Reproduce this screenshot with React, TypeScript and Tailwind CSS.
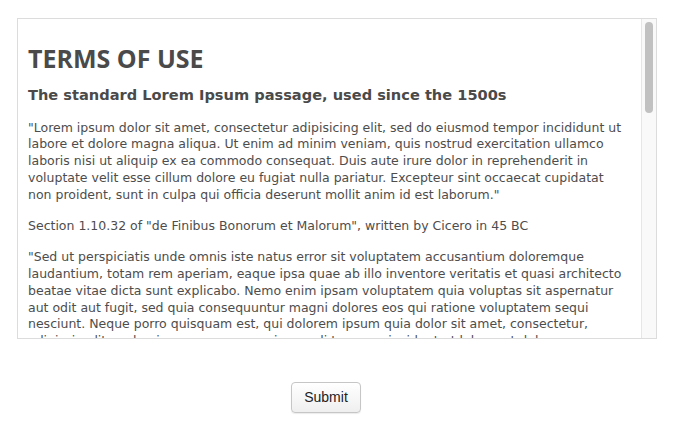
import React from "react";

const paragraphs = [
  '"Lorem ipsum dolor sit amet, consectetur adipisicing elit, sed do eiusmod tempor incididunt ut labore et dolore magna aliqua. Ut enim ad minim veniam, quis nostrud exercitation ullamco laboris nisi ut aliquip ex ea commodo consequat. Duis aute irure dolor in reprehenderit in voluptate velit esse cillum dolore eu fugiat nulla pariatur. Excepteur sint occaecat cupidatat non proident, sunt in culpa qui officia deserunt mollit anim id est laborum."',
  'Section 1.10.32 of "de Finibus Bonorum et Malorum", written by Cicero in 45 BC',
  '"Sed ut perspiciatis unde omnis iste natus error sit voluptatem accusantium doloremque laudantium, totam rem aperiam, eaque ipsa quae ab illo inventore veritatis et quasi architecto beatae vitae dicta sunt explicabo. Nemo enim ipsam voluptatem quia voluptas sit aspernatur aut odit aut fugit, sed quia consequuntur magni dolores eos qui ratione voluptatem sequi nesciunt. Neque porro quisquam est, qui dolorem ipsum quia dolor sit amet, consectetur, adipisci velit, sed quia non numquam eius modi tempora incidunt ut labore et dolore magnam aliquam quaerat voluptatem. Ut enim ad minima veniam, quis nostrum exercitationem ullam corporis suscipit laboriosam, nisi ut aliquid ex ea commodi consequatur?"',
  'Section 1.10.33 of "de Finibus Bonorum et Malorum", written by Cicero in 45 BC',
];

const App = () => {
  return (
    <div className="min-h-[433px] bg-white pl-[17px] pt-[18px] font-['DejaVu_Sans',sans-serif]">
      <div className="flex h-[321px] w-[640px] border border-[#dcdcdc] bg-white">
        {/* scrolling text area */}
        <div className="flex-1 overflow-hidden px-[10px] text-[#4d4d4d]">
          <h1 className="mt-[24px] font-['Open_Sans',sans-serif] text-[25px] leading-[30px] font-bold text-[#4a4a4a]">
            TERMS OF USE
          </h1>
          <h3 className="mt-[12px] text-[14.6px] leading-[20px] font-bold text-[#4a4a4a]">
            The standard Lorem Ipsum passage, used since the 1500s
          </h3>
          {paragraphs.map((p, i) => (
            <p key={i} className="mt-[14.5px] text-[12.5px] leading-[16.8px]">
              {p}
            </p>
          ))}
        </div>
        {/* scrollbar */}
        <div className="w-[15px] shrink-0 border-l border-[#e6e6e6] bg-[#f9f9f9] px-[3px] pt-[3px]">
          <div className="h-[91px] w-[8px] rounded-full bg-[#c1c1c1]" />
        </div>
      </div>
      <div className="mt-[43px] pl-[274px]">
        <button className="h-[31px] w-[70px] rounded-[4px] border border-[#c6c6c6] bg-gradient-to-b from-white to-[#efefef] font-['Liberation_Sans',sans-serif] text-[14px] text-[#222] shadow-[0_1px_1px_rgba(0,0,0,0.08)]">
          Submit
        </button>
      </div>
    </div>
  );
};

export default App;
